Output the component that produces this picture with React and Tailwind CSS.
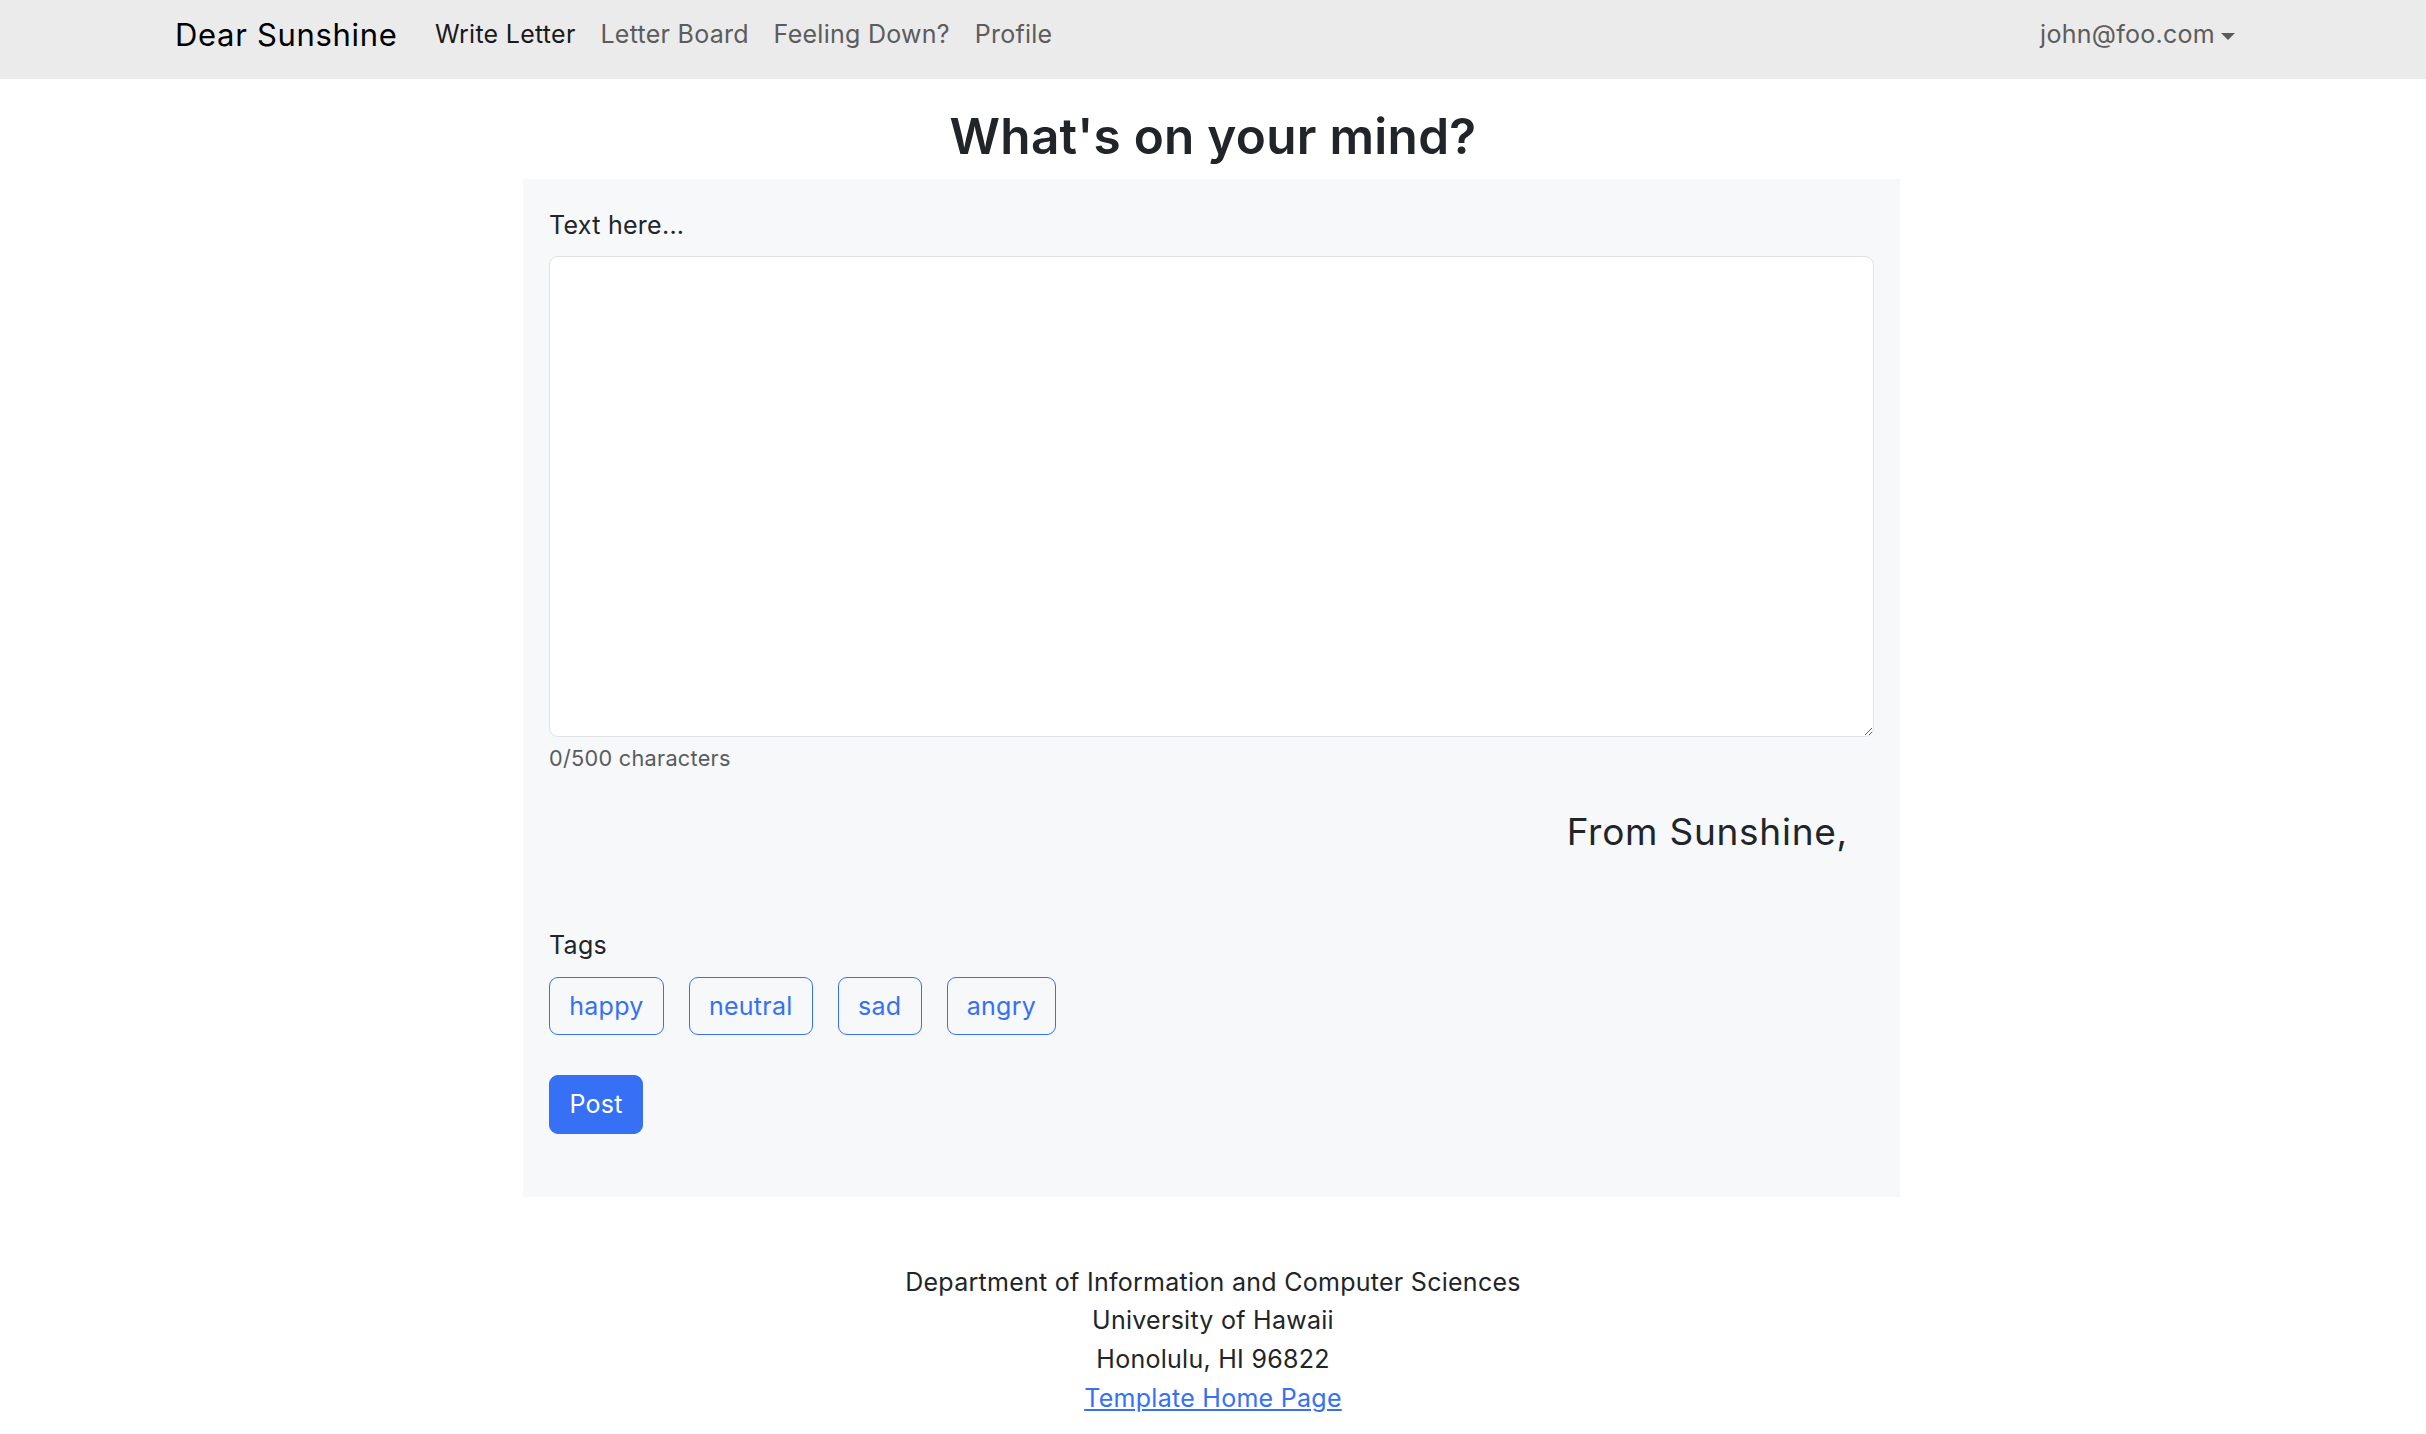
import React from "react";

const tags = ["happy", "neutral", "sad", "angry"];

export default function App() {
    return (
        <div className="min-h-screen bg-white text-[#212529] tracking-[0.017em] font-['Inter','Noto_Sans',sans-serif]">

            {/* Navbar */}
            <nav className="flex h-[79px] items-center bg-[#ebebeb] pb-[9px] pl-[175px] pr-[191px]">
                <a className="mr-[25px] text-[31px] leading-[1.5] tracking-[0.022em] text-black">Dear Sunshine</a>
                <ul className="flex items-center text-[25px] leading-[1.5]">
                    <li className="px-[12.4px] text-[#1a1a1a]">Write Letter</li>
                    <li className="px-[12.4px] text-[#5c5c5c]">Letter Board</li>
                    <li className="px-[12.4px] text-[#5c5c5c]">Feeling Down?</li>
                    <li className="px-[12.4px] text-[#5c5c5c]">Profile</li>
                </ul>
                <div className="ml-auto flex items-center text-[25px] leading-[1.5] text-[#5c5c5c]">
                    john@foo.com
                    <span className="ml-[6px] mt-[2px] h-0 w-0 border-x-[7px] border-t-[7px] border-x-transparent border-t-[#5c5c5c]" />
                </div>
            </nav>

            {/* Page title */}
            <h2 className="mt-[28px] mb-[13px] text-center text-[49.5px] font-semibold leading-[1.2]">
                What's on your mind?
            </h2>

            {/* Letter form */}
            <div className="ml-[523px] w-[1377px] bg-[#f7f8fa] px-[26px] pt-[28px] pb-[63px]">
                <label className="block text-[25px] leading-[1.5]">Text here...</label>
                <textarea className="mt-[11px] block h-[481px] w-full resize-y rounded-[9px] border-[1.5px] border-[#dee2e6] bg-white" />
                <div className="mt-[5px] text-[21.7px] leading-[1.5] text-[#595c5f]">0/500 characters</div>

                <div className="mt-[36px] pr-[26px] text-right text-[37px] leading-[1.2] tracking-[0.02em]">From Sunshine,</div>

                <div className="mt-[72px] text-[25px] leading-[1.5]">Tags</div>
                <div className="mt-[13px] flex gap-[25px]">
                    {tags.map((t) => (
                        <button
                            key={t}
                            className="rounded-[9px] border-[1.5px] border-[#3570f5] px-[19.2px] py-[9.3px] text-[25px] leading-[1.5] text-[#3570f5]"
                        >
                            {t}
                        </button>
                    ))}
                </div>

                <button className="mt-[40px] rounded-[9px] border-[1.5px] border-[#3570f5] bg-[#3570f5] px-[19.5px] py-[9.3px] text-[25px] leading-[1.5] text-white">
                    Post
                </button>
            </div>

            {/* Footer */}
            <footer className="mt-[66px] text-center text-[25px] leading-[38.7px]">
                <div>Department of Information and Computer Sciences</div>
                <div>University of Hawaii</div>
                <div>Honolulu, HI 96822</div>
                <a className="text-[#3570f5] underline">Template Home Page</a>
            </footer>
        </div>
    );
}
